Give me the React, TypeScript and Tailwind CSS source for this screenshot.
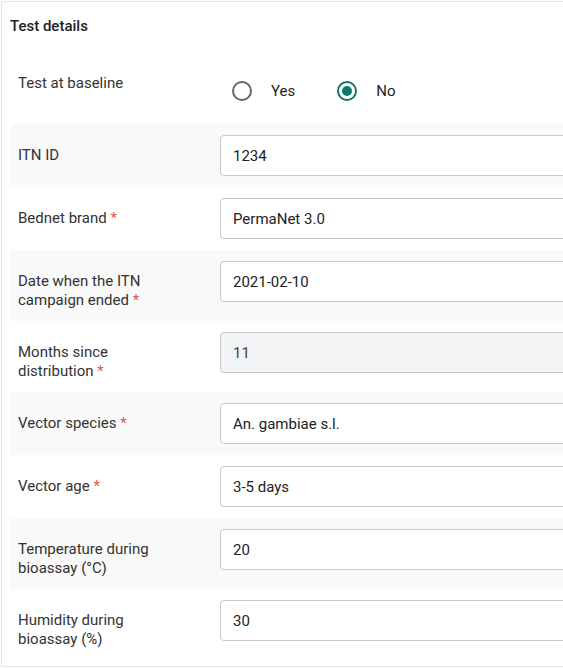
import React from "react";

type Field = {
	label: string;
	value: string;
	required?: boolean;
	disabled?: boolean;
};

const fields: Field[] = [
	{ label: "ITN ID", value: "1234" },
	{ label: "Bednet brand", value: "PermaNet 3.0", required: true },
	{ label: "Date when the ITN campaign ended", value: "2021-02-10", required: true },
	{ label: "Months since distribution", value: "11", required: true, disabled: true },
	{ label: "Vector species", value: "An. gambiae s.l.", required: true },
	{ label: "Vector age", value: "3-5 days", required: true },
	{ label: "Temperature during bioassay (°C)", value: "20" },
	{ label: "Humidity during bioassay (%)", value: "30" },
];

function Radio({ checked, label }: { checked: boolean; label: string }) {
	return (
		<label className="flex items-center gap-[19px]">
			<span
				className={`w-[20px] h-[20px] rounded-full border-2 flex items-center justify-center ${
					checked ? "border-[#0b7a66]" : "border-[#666]"
				}`}
			>
				{checked && <span className="w-[10px] h-[10px] rounded-full bg-[#0b7a66]" />}
			</span>
			<span className="text-[15px] leading-[20px] text-[#222]">{label}</span>
		</label>
	);
}

export default function App() {
	const [baseline, setBaseline] = React.useState(false);

	return (
		<div className="w-[563px] h-[668px] overflow-hidden bg-white" style={{ fontFamily: "Roboto, sans-serif" }}>
			<div className="ml-px mt-px w-[620px] h-[666px] border border-[#e6e6e6] px-[8px]">
				<div className="pt-[14px] h-[35px] text-[15px] leading-[20px] font-medium text-[#222]">
					Test details
				</div>

				<div className="grid grid-cols-[210px_1fr] h-[87px]">
					<div className="pl-[8px] pt-[36px] text-[15px] leading-[20px] text-[#333]">Test at baseline</div>
					<div className="flex items-start gap-[42px] pt-[44px] pl-[12px]">
						<div onClick={() => setBaseline(true)}>
							<Radio checked={baseline} label="Yes" />
						</div>
						<div onClick={() => setBaseline(false)}>
							<Radio checked={!baseline} label="No" />
						</div>
					</div>
				</div>

				{fields.map((f, i) => {
					const words = f.label.split(" ");
					const last = words.pop();
					return (
						<div
							key={f.label}
							className={`grid grid-cols-[210px_1fr] items-start py-[11px] ${
								i % 2 === 0 ? "bg-[#f9f9f9]" : "bg-white"
							}`}
						>
							<div className="pl-[8px] pr-[40px] pt-[11px] text-[15px] leading-[19px] text-[#333]">
								{words.length > 0 && words.join(" ") + " "}
								<span className="whitespace-nowrap">
									{last}
									{f.required && <span className="text-[#e5534b]">{"\u00a0*"}</span>}
								</span>
							</div>
							<input
								readOnly
								value={f.value}
								disabled={f.disabled}
								className={`h-[41px] w-full rounded-[4px] border border-[#c9c9c9] pl-[12px] text-[15px] text-[#222] outline-none ${
									f.disabled ? "bg-[#f2f3f4] text-[#444]" : "bg-white"
								}`}
							/>
						</div>
					);
				})}
			</div>
		</div>
	);
}
